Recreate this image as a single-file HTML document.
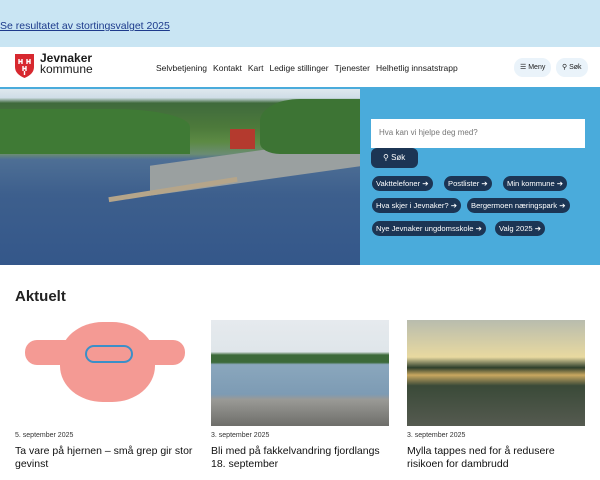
<!DOCTYPE html>
<html><head><meta charset="utf-8"><style>
*{box-sizing:border-box;margin:0;padding:0}
body{width:600px;height:480px;overflow:hidden;font-family:"Liberation Sans",sans-serif;background:#fff;color:#1a1a1a}
.top{height:47px;background:#c9e5f3;padding-top:16px}
.top a{color:#1d3b8c;font-size:10.5px;text-decoration:underline;margin-left:0}
.hdr{height:42px;position:relative;border-bottom:2px solid #4aabdb}
.logo{position:absolute;left:15px;top:7px}
.brand{position:absolute;left:40px;top:6px;font-size:12px;line-height:11px}
.brand b{font-weight:bold}
.nav{position:absolute;left:156px;top:16px;font-size:8.5px}
.nav span{margin-right:6px}
.pill{position:absolute;top:11px;height:19px;background:#eaf3fa;border-radius:9px;font-size:7px;line-height:19px;padding:0 6px}
.hero{position:relative;height:176px}
.img{position:absolute;left:0;top:0;width:360px;height:176px;overflow:hidden;background:linear-gradient(#dfe8ee 0,#cfdde7 5%,#3f6a3c 8%,#4d7a3b 22%,#5c8a44 30%,#6b8c73 37%,#4e6f95 40%,#3d5f8d 60%,#34578a 100%)}
.panel{position:absolute;left:360px;top:0;width:240px;height:176px;background:#4aabdb}
.search{position:absolute;left:11px;top:30px;width:214px;height:29px;background:#fff;font-size:8px;color:#777;padding:9px 8px}
.btn{position:absolute;left:11px;top:59px;width:47px;height:20px;background:#1c3554;border-radius:6px;color:#fff;font-size:8px;line-height:20px;padding-left:12px}
.tag{position:absolute;height:15px;background:#1c3554;color:#fff;border-radius:8px;font-size:7.6px;line-height:15px;padding:0 4px}
h2{position:absolute;left:15px;top:288px;font-size:15px;font-weight:bold;color:#222}
.card{position:absolute;top:320px;width:178px}
.card .pic{height:106px}
.date{font-size:7px;color:#333;margin-top:6px}
.t{font-size:10.5px;line-height:13px;margin-top:6px;color:#111}
</style></head><body>
<div class="top"><a>Se resultatet av stortingsvalget 2025</a></div>
<div class="hdr">
<svg class="logo" width="19" height="24" viewBox="0 0 19 24"><path d="M0 0H19V13Q19 20 9.5 24Q0 20 0 13Z" fill="#d7282f"/><g stroke="#fff" stroke-width="1.4" fill="none"><path d="M4 5v5M7 5v5M4 7.5h3M12 5v5M15 5v5M12 7.5h3M8 12v5M11 12v5M8 14.5h3M9.5 17v4"/></g></svg>
<div class="brand"><b>Jevnaker</b><br>kommune</div>
<div class="nav"><span>Selvbetjening</span><span>Kontakt</span><span>Kart</span><span>Ledige stillinger</span><span>Tjenester</span><span>Helhetlig innsatstrapp</span></div>
<div class="pill" style="left:514px">☰ Meny</div>
<div class="pill" style="left:556px">⚲ Søk</div>
</div>
<div class="hero">
<div class="img">
<div style="position:absolute;left:0;top:20px;width:190px;height:45px;background:#3f7a35;border-radius:0 40% 0 0"></div>
<div style="position:absolute;left:150px;top:62px;width:210px;height:30px;background:#9aa0a0;transform:skewY(-8deg)"></div>
<div style="position:absolute;left:230px;top:40px;width:25px;height:20px;background:#b43a2e"></div>
<div style="position:absolute;left:260px;top:10px;width:100px;height:55px;background:#3d7434;border-radius:40% 0 0 20%"></div>
<div style="position:absolute;left:108px;top:98px;width:130px;height:5px;background:#b5a58a;transform:rotate(-9deg)"></div>
</div>
<div class="panel">
<div class="search">Hva kan vi hjelpe deg med?</div>
<div class="btn">⚲ Søk</div>
<div class="tag" style="left:12px;top:87px">Vakttelefoner ➔</div>
<div class="tag" style="left:84px;top:87px">Postlister ➔</div>
<div class="tag" style="left:143px;top:87px">Min kommune ➔</div>
<div class="tag" style="left:12px;top:109px">Hva skjer i Jevnaker? ➔</div>
<div class="tag" style="left:107px;top:109px">Bergermoen næringspark ➔</div>
<div class="tag" style="left:12px;top:132px">Nye Jevnaker ungdomsskole ➔</div>
<div class="tag" style="left:135px;top:132px">Valg 2025 ➔</div>
</div>
</div>
<h2>Aktuelt</h2>
<div class="card" style="left:15px"><div class="pic" style="position:relative"><div style="position:absolute;left:45px;top:2px;width:95px;height:80px;background:#f49a94;border-radius:45%"></div><div style="position:absolute;left:10px;top:20px;width:160px;height:25px;background:#f49a94;border-radius:12px"></div><div style="position:absolute;left:70px;top:25px;width:48px;height:18px;border:2px solid #3b8fc8;border-radius:9px"></div></div><div class="date">5. september 2025</div><div class="t">Ta vare på hjernen – små grep gir stor gevinst</div></div>
<div class="card" style="left:211px"><div class="pic" style="background:linear-gradient(#e6eaee 0,#dfe6ea 30%,#3c6a3a 33%,#3c6a3a 40%,#8aa7bd 42%,#7d9bb4 70%,#9a9a96 75%,#6e6e6a 100%)"></div><div class="date">3. september 2025</div><div class="t">Bli med på fakkelvandring fjordlangs 18. september</div></div>
<div class="card" style="left:407px"><div class="pic" style="background:linear-gradient(#b8bcae 0,#e8d9a0 35%,#2e3f2c 45%,#c9a860 52%,#3a4a38 62%,#555a50 100%)"></div><div class="date">3. september 2025</div><div class="t">Mylla tappes ned for å redusere risikoen for dambrudd</div></div>
</body></html>
